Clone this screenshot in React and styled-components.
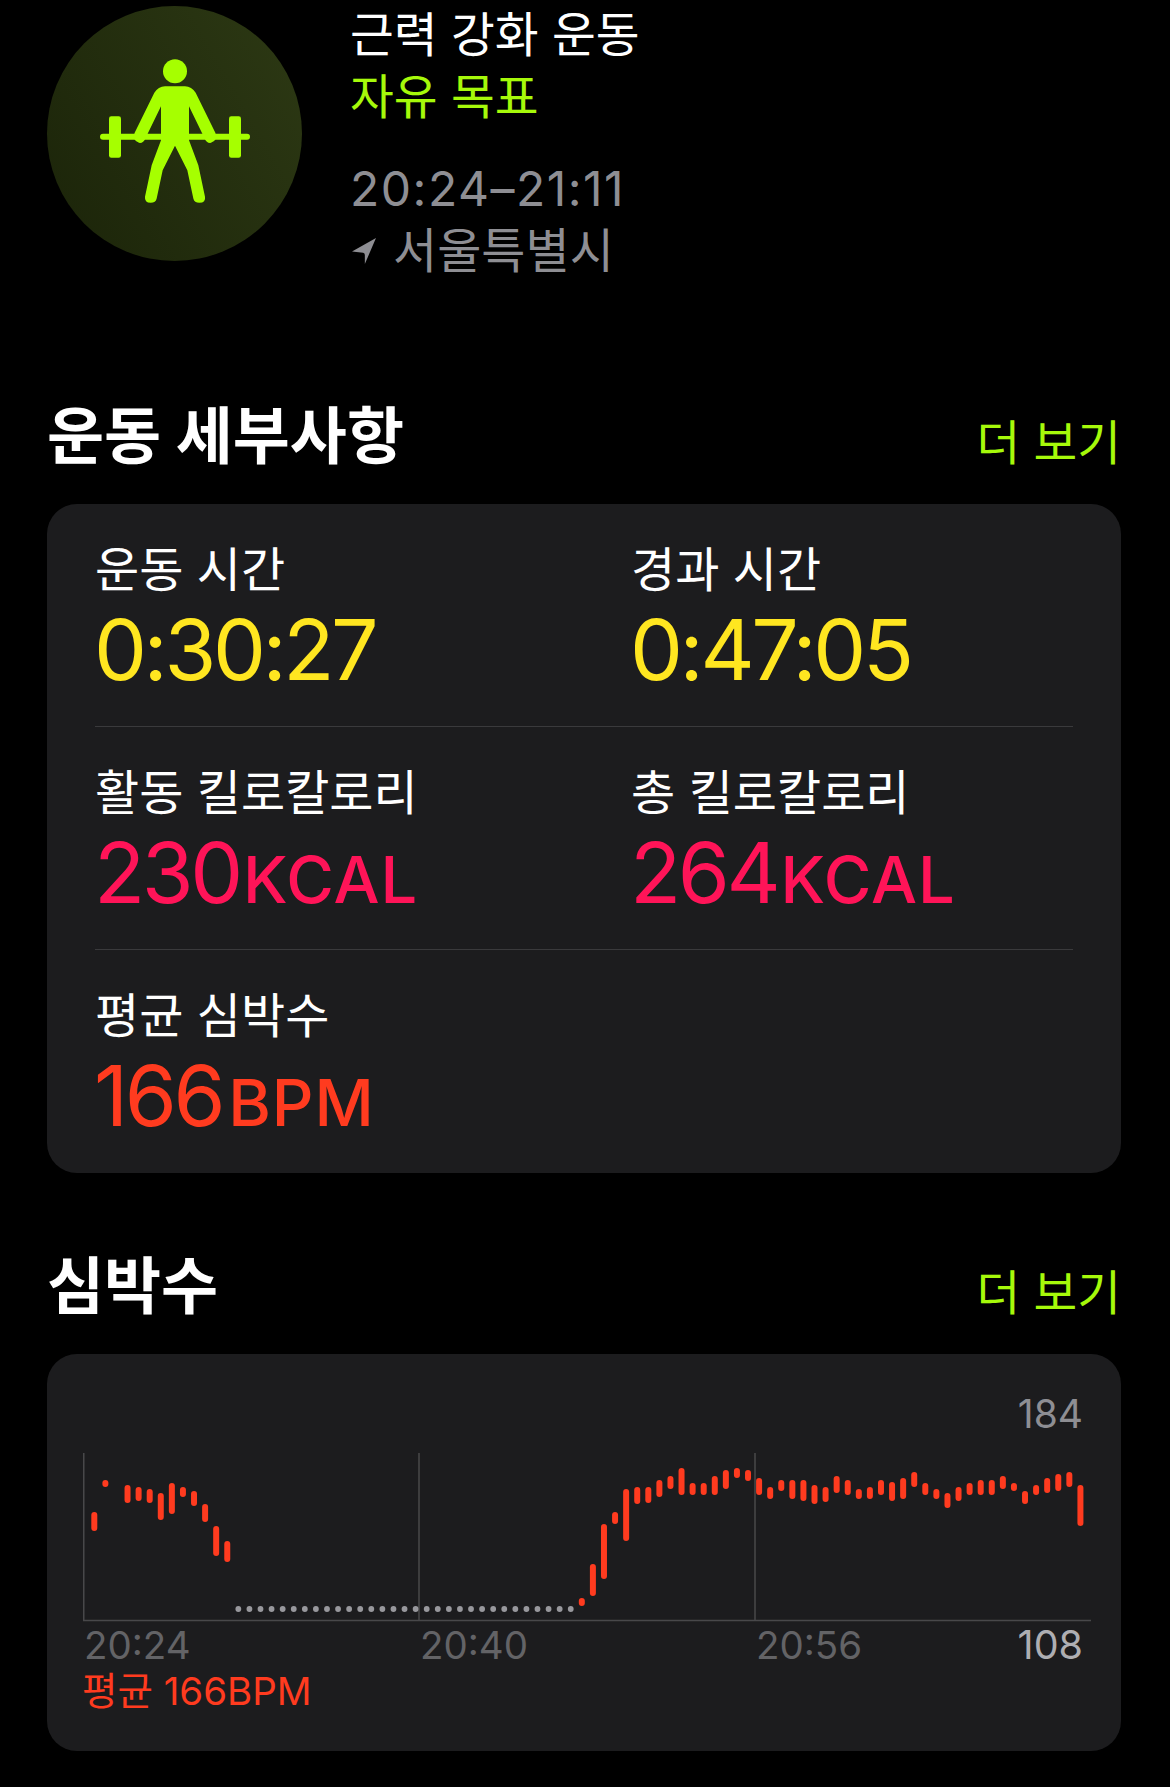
import React from "react";
import styled, { createGlobalStyle } from "styled-components";

const SANS = `Inter, "Noto Sans CJK KR", sans-serif`;

const GlobalStyle = createGlobalStyle`
  html, body {
    margin: 0;
    padding: 0;
    background: #000;
  }
  body {
    font-family: ${SANS};
    -webkit-font-smoothing: antialiased;
  }
`;

const Page = styled.div`
  width: 1170px;
  height: 1787px;
  box-sizing: border-box;
  padding: 6px 47px 0 47px;
  background: #000;
  overflow: hidden;
`;

const Header = styled.header`
  display: flex;
  align-items: flex-start;
  gap: 48px;
  height: 390px;
`;

const Badge = styled.div`
  width: 255px;
  height: 255px;
  flex: none;
  box-sizing: border-box;
  padding-bottom: 5px;
  border-radius: 50%;
  background: linear-gradient(60deg, #1b2409, #2d3914);
  display: flex;
  align-items: center;
  justify-content: center;
`;

const Summary = styled.div`
  display: flex;
  flex-direction: column;
  margin-top: -2px;
`;

const WorkoutName = styled.div`
  font-size: 47.600px;
  line-height: 62px;
  color: ${(p) => p.$color};
`;

const TimeRange = styled.div`
  margin-top: 31px;
  font-size: 48px;
  line-height: 60px;
  letter-spacing: 1.5px;
  color: #8e8e93;
`;

const Place = styled.div`
  display: flex;
  align-items: center;
  gap: 17px;
  margin-top: 2px;
  padding-left: 2px;
  font-size: 48px;
  line-height: 60px;
  color: #8e8e93;
`;

const SectionHead = styled.div`
  display: flex;
  align-items: center;
  justify-content: space-between;
  box-sizing: border-box;
  height: 108px;
  padding: 0 2px 36px 0;
`;

const SectionTitle = styled.h2`
  margin: 0;
  font-size: 62px;
  font-weight: 700;
  color: #fff;
`;

const MoreLink = styled.a`
  margin-top: 14px;
  font-size: 47.500px;
  color: #a6f90a;
`;

const Card = styled.section`
  width: 1074px;
  box-sizing: border-box;
  border-radius: 30px;
  background: #1c1c1e;
`;

const StatsCard = styled(Card)`
  height: 669px;
  padding: 0 48px;
  margin-bottom: 73px;
`;

const StatRow = styled.div`
  display: grid;
  grid-template-columns: 536px 1fr;
  height: 223px;
  box-sizing: border-box;
  padding-top: 36px;
  border-bottom: ${(p) => (p.$last ? "none" : "1px solid #3a3a3c")};
`;

const StatLabel = styled.div`
  font-size: 48px;
  line-height: 60px;
  color: #fff;
`;

const StatValue = styled.div`
  margin-left: -1px;
  font-size: 84px;
  line-height: 100px;
  letter-spacing: -3.400px;
  color: ${(p) => p.$color};
`;

const Unit = styled.span`
  margin-left: ${(p) => p.$gap}px;
  font-size: 65px;
  font-weight: 500;
  letter-spacing: 1px;
`;

const ChartCard = styled(Card)`
  height: 397px;
  padding: 37px 30px 0 36px;
`;

const MaxLabel = styled.div`
  text-align: right;
  padding-right: 8px;
  font-size: 39px;
  line-height: 46px;
  color: #8e8e93;
`;

const ChartSvg = styled.svg`
  display: block;
  margin-top: 16px;
`;

const AxisRow = styled.div`
  display: grid;
  grid-template-columns: 336px 336px 1fr auto;
  padding: 0 8px 0 1px;
  font-size: 38.500px;
  line-height: 46px;
  color: #636366;
`;

const MinLabel = styled.span`
  font-size: 39.500px;
  color: #aeaeb2;
`;

const Average = styled.div`
  margin-left: -1px;
  font-size: 38.500px;
  line-height: 46px;
  color: #ff3b1f;
`;

// [top, bottom] of each heart-rate bar, in page pixels read from the reference
const BARS = [
  [1512, 1531], [1480, 1487], null, [1485, 1503], [1487, 1501], [1489, 1503],
  [1493, 1520], [1483, 1514], [1487, 1497], [1491, 1506], [1504, 1522],
  [1526, 1556], [1541, 1562],
];

const BARS_RISE = [
  [1598, 1606], [1564, 1596], [1524, 1579], [1512, 1524], [1489, 1541],
  [1487, 1504], [1487, 1503], [1480, 1497], [1476, 1489], [1468, 1495],
  [1483, 1495], [1483, 1495], [1476, 1495], [1470, 1489], [1468, 1478],
];

const BARS_END = [
  [1470, 1481], [1478, 1495], [1487, 1499], [1480, 1491], [1480, 1499],
  [1480, 1501], [1485, 1504], [1487, 1502], [1476, 1493], [1480, 1495],
  [1489, 1499], [1487, 1499], [1480, 1495], [1482, 1501], [1478, 1499],
  [1472, 1487], [1483, 1495], [1489, 1499], [1493, 1508], [1487, 1501],
  [1483, 1495], [1480, 1495], [1480, 1495], [1476, 1489], [1483, 1491],
  [1491, 1504], [1485, 1495], [1478, 1493], [1474, 1491], [1472, 1487],
  [1485, 1526],
];

const CHART_LEFT = 83;
const CHART_TOP = 1453;
const STEP = 11.08;
const barX = (i) => 94.3 + STEP * i - CHART_LEFT;

const HeartChart = () => {
  const bars = [...BARS, ...Array(31).fill(null), ...BARS_RISE, ...BARS_END];
  return (
    <ChartSvg width="1008" height="169" viewBox="0 0 1008 169">
      <path d="M0.750 0V168M336 0V168M672 0V168M0 167.500H1008" stroke="#48484a" strokeWidth="1.500" fill="none" />
      {Array.from({ length: 31 }, (_, i) => (
        <circle key={i} cx={barX(i + 13)} cy={1609 - CHART_TOP} r="2.900" fill="#98989d" />
      ))}
      {bars.map((b, i) =>
        b ? (
          <rect
            key={i}
            x={barX(i) - 3}
            y={b[0] - CHART_TOP}
            width="6"
            height={b[1] - b[0]}
            rx="3"
            fill="#ff3b1f"
          />
        ) : null
      )}
    </ChartSvg>
  );
};

const LifterIcon = () => (
  <svg width="150" height="144" viewBox="210 177 450 431">
    <g fill="#a6ff00">
      <circle cx="435" cy="213" r="36" />
      <path d="M405 258H465Q485 258 497 278L556 398Q565 420 543 428Q530 430 524 415L477 318V420L505 495L525 590Q528 608 508 608Q493 608 490 595L472 510L435 437L398 510L380 595Q377 608 362 608Q343 608 345 590L365 495L393 420V318L346 415Q340 430 327 428Q305 420 314 398L373 278Q385 258 405 258Z" />
      <rect x="210" y="401" width="450" height="18" rx="9" />
      <rect x="237" y="348" width="36" height="125" rx="7" />
      <rect x="597" y="348" width="36" height="125" rx="7" />
    </g>
  </svg>
);

const LocationArrow = () => (
  <svg width="24" height="26" viewBox="37 718 71 77">
    <path d="M108 718L37 758L70 762Q75 763 75 768V795Z" fill="#8e8e93" />
  </svg>
);

const App = () => {
  return (
    <Page>
      <GlobalStyle />
      <Header>
        <Badge>
          <LifterIcon />
        </Badge>
        <Summary>
          <WorkoutName $color="#fff">근력 강화 운동</WorkoutName>
          <WorkoutName $color="#a6f90a">자유 목표</WorkoutName>
          <TimeRange>20:24–21:11</TimeRange>
          <Place>
            <LocationArrow />
            서울특별시
          </Place>
        </Summary>
      </Header>

      <SectionHead>
        <SectionTitle>운동 세부사항</SectionTitle>
        <MoreLink>더 보기</MoreLink>
      </SectionHead>
      <StatsCard>
        <StatRow>
          <div>
            <StatLabel>운동 시간</StatLabel>
            <StatValue $color="#ffe620">0:30:27</StatValue>
          </div>
          <div>
            <StatLabel>경과 시간</StatLabel>
            <StatValue $color="#ffe620">0:47:05</StatValue>
          </div>
        </StatRow>
        <StatRow>
          <div>
            <StatLabel>활동 킬로칼로리</StatLabel>
            <StatValue $color="#ff1458">230<Unit $gap={3}>KCAL</Unit></StatValue>
          </div>
          <div>
            <StatLabel>총 킬로칼로리</StatLabel>
            <StatValue $color="#ff1458">264<Unit $gap={3}>KCAL</Unit></StatValue>
          </div>
        </StatRow>
        <StatRow $last>
          <div>
            <StatLabel>평균 심박수</StatLabel>
            <StatValue $color="#ff3b1f">166<Unit $gap={6}>BPM</Unit></StatValue>
          </div>
        </StatRow>
      </StatsCard>

      <SectionHead>
        <SectionTitle>심박수</SectionTitle>
        <MoreLink>더 보기</MoreLink>
      </SectionHead>
      <ChartCard>
        <MaxLabel>184</MaxLabel>
        <HeartChart />
        <AxisRow>
          <span>20:24</span>
          <span>20:40</span>
          <span>20:56</span>
          <MinLabel>108</MinLabel>
        </AxisRow>
        <Average>평균 166BPM</Average>
      </ChartCard>
    </Page>
  );
};

export default App;
